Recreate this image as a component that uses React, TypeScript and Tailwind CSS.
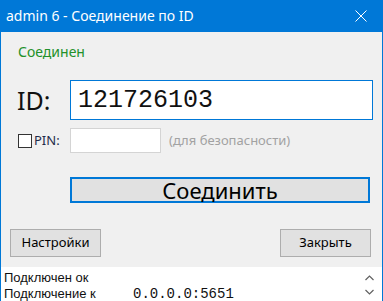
import React from "react";

export default function App() {
  const ui = { fontFamily: '"Noto Sans", "Open Sans", sans-serif' };
  const logFont = { fontFamily: '"Liberation Sans", Arial, sans-serif' };
  const mono = { fontFamily: '"Liberation Mono", "DejaVu Sans Mono", monospace' };
  return (
    <div
      className="w-[383px] h-[301px] bg-[#f0f0f0] border-x border-[#0078d7] flex flex-col overflow-hidden"
      style={ui}
    >
      <div className="h-[32px] shrink-0 bg-[#0078d7] flex items-center justify-between pl-[5px] pr-[15px] text-white">
        <span className="text-[14px] leading-none">admin 6 - Соединение по ID</span>
        <svg width="12" height="12" viewBox="0 0 12 12" className="block">
          <path d="M0.5 0.5 L11.5 11.5 M11.5 0.5 L0.5 11.5" stroke="white" strokeWidth="1" />
        </svg>
      </div>

      <div className="flex flex-col flex-1">
        <div className="mt-[12px] pl-[17px] h-[16px] text-[14px] leading-[16px] text-[#23912a]">
          Соединен
        </div>

        <div className="mt-[20px] flex items-center h-[40px]">
          <div className="w-[69px] pl-[16px] text-[25px] leading-none text-[#111]">ID:</div>
          <div className="w-[303px] h-[40px] bg-white border border-[#0078d7] flex items-center pl-[7px]">
            <span className="text-[25px] leading-none text-[#111]" style={mono}>121726103</span>
          </div>
        </div>

        <div className="mt-[8px] flex items-center h-[25px]">
          <div className="w-[69px] pl-[17px] flex items-center gap-[2px]">
            <div className="w-[14px] h-[14px] border border-[#333] bg-white" />
            <span className="text-[13px] leading-none text-[#1f2c4a]">PIN:</span>
          </div>
          <div className="w-[91px] h-[25px] bg-white border border-[#d4d4d4]" />
          <span className="ml-[8px] text-[13px] leading-none text-[#a2a2a2]">(для безопасности)</span>
        </div>

        <div className="mt-[24px] ml-[69px] w-[300px] h-[26px] bg-[#e1e1e1] border-2 border-[#0078d7] flex items-center justify-center">
          <span className="text-[22px] leading-none text-black">Соединить</span>
        </div>

        <div className="mt-[26px] flex justify-between pl-[9px] pr-[11px]">
          <div className="w-[91px] h-[28px] bg-[#e1e1e1] border border-[#adadad] flex items-center justify-center text-[13px] text-black">
            Настройки
          </div>
          <div className="w-[91px] h-[28px] bg-[#e1e1e1] border border-[#adadad] flex items-center justify-center text-[13px] text-black">
            Закрыть
          </div>
        </div>

        <div className="mt-[10px] flex-1 bg-white flex">
          <div className="flex-1 pl-[3px] pt-[3px] text-[13px] leading-[16px] text-[#111]" style={logFont}>
            <div className="h-[16px]">Подключен ок</div>
            <div className="flex h-[16px]">
              <span className="w-[129px]">Подключение к</span>
              <span className="text-[14px]" style={mono}>0.0.0.0:5651</span>
            </div>
          </div>
          <div className="w-[17px] flex flex-col items-center pt-[8px] gap-[8px] mr-[4px]">
            <svg width="9" height="6" viewBox="0 0 9 6">
              <path d="M0.5 5 L4.5 1 L8.5 5" stroke="#606060" fill="none" strokeWidth="1.2" />
            </svg>
            <svg width="9" height="6" viewBox="0 0 9 6">
              <path d="M0.5 1 L4.5 5 L8.5 1" stroke="#606060" fill="none" strokeWidth="1.2" />
            </svg>
          </div>
        </div>
      </div>
    </div>
  );
}
